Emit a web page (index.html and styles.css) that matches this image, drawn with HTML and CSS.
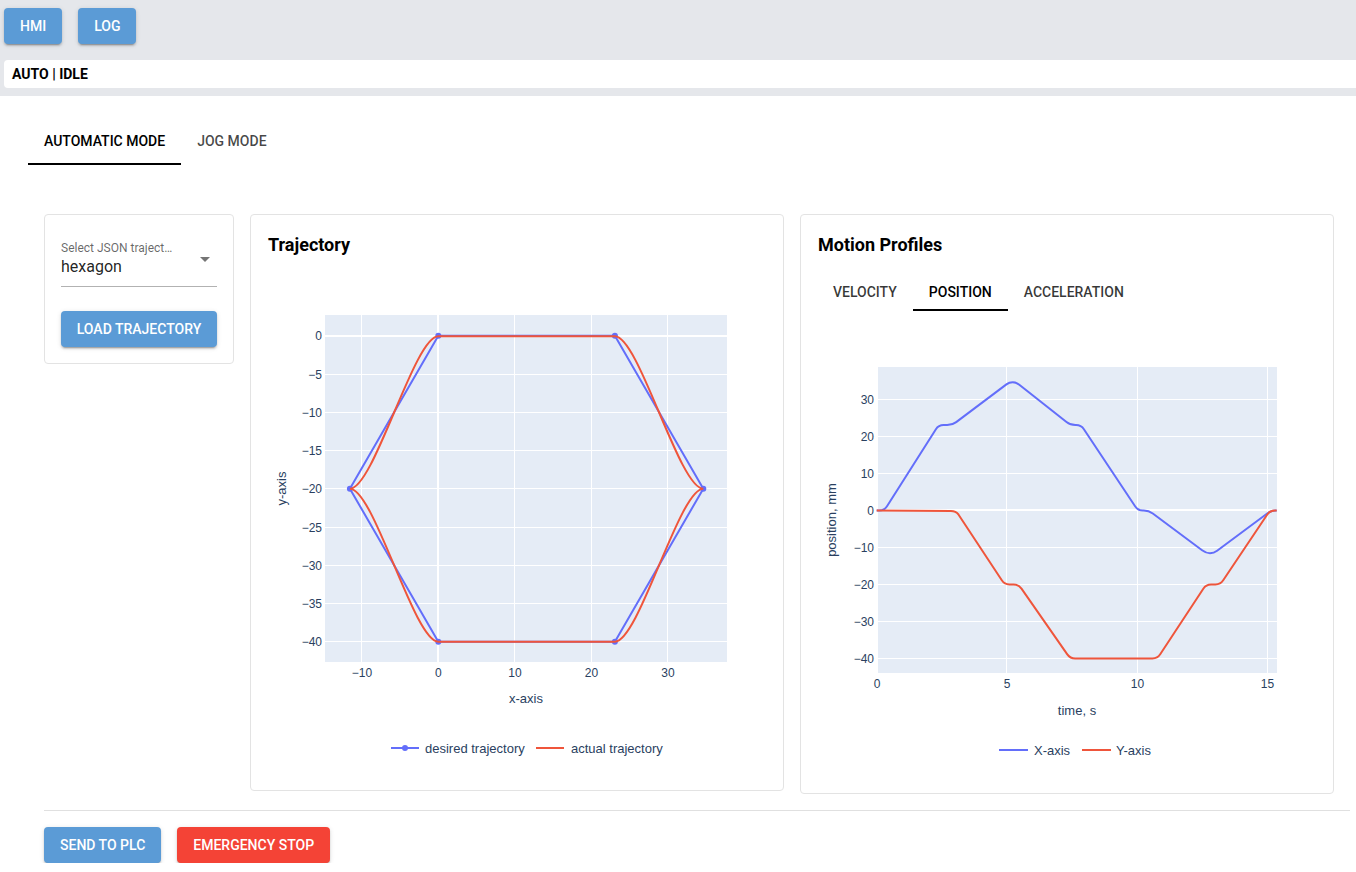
FILE: index.html
```html
<!DOCTYPE html>
<html lang="en">
<head>
<meta charset="utf-8">
<title>HMI</title>
<link rel="stylesheet" href="styles.css">
</head>
<body>
<header class="topbar">
  <div class="nav">
    <button class="btn btn-blue">HMI</button>
    <button class="btn btn-blue">LOG</button>
  </div>
  <div class="status">AUTO&nbsp;|&nbsp;IDLE</div>
</header>

<main class="main">
  <nav class="tabs">
    <div class="tab active">Automatic Mode</div>
    <div class="tab">Jog Mode</div>
  </nav>

  <section class="panel">
    <div class="cards">
      <div class="card control-card">
        <div class="select">
          <div class="select-label">Select JSON traject…</div>
          <div class="select-input">
            <span class="select-value">hexagon</span>
            <svg class="select-arrow" width="10" height="5" viewBox="0 0 10 5"><path d="M0 0h10L5 5z" fill="rgba(0,0,0,0.54)"/></svg>
          </div>
        </div>
        <button class="btn btn-blue btn-full">Load Trajectory</button>
      </div>

      <div class="card chart-card">
        <h2 class="card-title">Trajectory</h2>
        <svg class="chart" width="532" height="533" viewBox="251 257 532 533">
          <rect x="325" y="315" width="402" height="347" fill="#E5ECF6"/>
          <g stroke="#fff" stroke-width="1" shape-rendering="crispEdges">
            <line x1="361.5" y1="315" x2="361.5" y2="662"/>
            <line x1="514.5" y1="315" x2="514.5" y2="662"/>
            <line x1="591.5" y1="315" x2="591.5" y2="662"/>
            <line x1="667.5" y1="315" x2="667.5" y2="662"/>
            <line x1="325" y1="374.5" x2="727" y2="374.5"/>
            <line x1="325" y1="412.5" x2="727" y2="412.5"/>
            <line x1="325" y1="450.5" x2="727" y2="450.5"/>
            <line x1="325" y1="488.5" x2="727" y2="488.5"/>
            <line x1="325" y1="527.5" x2="727" y2="527.5"/>
            <line x1="325" y1="565.5" x2="727" y2="565.5"/>
            <line x1="325" y1="603.5" x2="727" y2="603.5"/>
            <line x1="325" y1="641.5" x2="727" y2="641.5"/>
          </g>
          <g stroke="#fff" stroke-width="2" shape-rendering="crispEdges">
            <line x1="438" y1="315" x2="438" y2="662"/>
            <line x1="325" y1="336" x2="727" y2="336"/>
          </g>
          <path d="M438.3 335.7 L614.9 335.7 L703.3 488.7 L614.9 641.7 L438.3 641.7 L349.9 488.7 Z" fill="none" stroke="#636efa" stroke-width="2" stroke-linejoin="round"/>
          <g fill="#636efa">
            <circle cx="438.3" cy="335.7" r="3"/>
            <circle cx="614.9" cy="335.7" r="3"/>
            <circle cx="703.3" cy="488.7" r="3"/>
            <circle cx="614.9" cy="641.7" r="3"/>
            <circle cx="438.3" cy="641.7" r="3"/>
            <circle cx="349.9" cy="488.7" r="3"/>
          </g>
          <path d="M438.3 336.3 L614.9 336.3 C638.9 336.3 679.3 488.7 703.3 488.7 C679.3 488.7 638.9 641.7 614.9 641.7 L438.3 641.7 C414.3 641.7 373.9 488.7 349.9 488.7 C373.9 488.7 414.3 336.3 438.3 336.3" fill="none" stroke="#EF553B" stroke-width="2"/>
          <g class="tick" text-anchor="end">
            <text x="322" y="340.3">0</text>
            <text x="322" y="378.6">−5</text>
            <text x="322" y="416.8">−10</text>
            <text x="322" y="455">−15</text>
            <text x="322" y="493.2">−20</text>
            <text x="322" y="531.5">−25</text>
            <text x="322" y="569.7">−30</text>
            <text x="322" y="608">−35</text>
            <text x="322" y="646.2">−40</text>
          </g>
          <g class="tick" text-anchor="middle">
            <text x="362" y="677">−10</text>
            <text x="438.3" y="677">0</text>
            <text x="515" y="677">10</text>
            <text x="591.5" y="677">20</text>
            <text x="668" y="677">30</text>
          </g>
          <text class="axis-title" x="526" y="702.5" text-anchor="middle">x-axis</text>
          <text class="axis-title" x="285.5" y="488.5" text-anchor="middle" transform="rotate(-90 285.5 488.5)">y-axis</text>
          <line x1="391" y1="748" x2="419" y2="748" stroke="#636efa" stroke-width="2"/>
          <circle cx="405" cy="748" r="3" fill="#636efa"/>
          <text class="legend" x="425" y="752.5">desired trajectory</text>
          <line x1="536" y1="748" x2="564" y2="748" stroke="#EF553B" stroke-width="2"/>
          <text class="legend" x="571" y="752.5">actual trajectory</text>
        </svg>
      </div>

      <div class="card chart-card">
        <h2 class="card-title">Motion Profiles</h2>
        <nav class="subtabs">
          <div class="subtab">Velocity</div>
          <div class="subtab active">Position</div>
          <div class="subtab">Acceleration</div>
        </nav>
        <svg class="chart" width="532" height="482" viewBox="801 311 532 482">
          <rect x="877" y="367" width="400" height="306" fill="#E5ECF6"/>
          <g stroke="#fff" stroke-width="1" shape-rendering="crispEdges">
            <line x1="877" y1="399.5" x2="1277" y2="399.5"/>
            <line x1="877" y1="436.5" x2="1277" y2="436.5"/>
            <line x1="877" y1="473.5" x2="1277" y2="473.5"/>
            <line x1="877" y1="547.5" x2="1277" y2="547.5"/>
            <line x1="877" y1="584.5" x2="1277" y2="584.5"/>
            <line x1="877" y1="621.5" x2="1277" y2="621.5"/>
            <line x1="877" y1="658.5" x2="1277" y2="658.5"/>
            <line x1="1006.5" y1="367" x2="1006.5" y2="673"/>
            <line x1="1137.5" y1="367" x2="1137.5" y2="673"/>
            <line x1="1267.5" y1="367" x2="1267.5" y2="673"/>
          </g>
          <g stroke="#fff" stroke-width="2" shape-rendering="crispEdges">
            <line x1="877" y1="510" x2="1277" y2="510"/>
            <line x1="877" y1="367" x2="877" y2="673"/>
          </g>
          <path d="M876.7 510.5 L879.3 510.5 Q884.3 510.5 887 506.3 L935.9 429.3 Q938.6 425.1 943.6 425.1 L947.2 425.1 Q952.2 425.1 956.2 422.1 L1006.4 384.4 Q1009.2 382.3 1012.7 382.3 Q1016.2 382.3 1019.3 384.8 L1066.5 422 Q1070.4 425.1 1075.4 425.1 L1076.1 425.1 Q1081.1 425.1 1083.9 429.3 L1135.1 506.3 Q1137.9 510.5 1142.9 510.5 L1143.8 510.5 Q1148.8 510.5 1152.8 513.5 L1202.1 550.2 Q1206.1 553.2 1210 553.2 Q1213.9 553.2 1217.1 550.8 L1267.2 513.5 Q1271.2 510.5 1276.2 510.5 L1276.7 510.5" fill="none" stroke="#636efa" stroke-width="2"/>
          <path d="M876.7 510.5 L950.9 511 Q955.9 511 958.6 514.7 L1001.8 580.3 Q1004.5 584.5 1009.5 584.5 L1013.6 584.5 Q1018.6 584.5 1021.5 588.6 L1067.3 654.4 Q1070.2 658.5 1075.2 658.5 L1152.4 658.5 Q1157.4 658.5 1160.2 654.3 L1203.3 588.7 Q1206.1 584.5 1211.1 584.5 L1215.4 584.5 Q1220.4 584.5 1223.2 580.3 L1267.1 514.7 Q1269.9 510.5 1274.9 510.5 L1276.7 510.5" fill="none" stroke="#EF553B" stroke-width="2"/>
          <g class="tick" text-anchor="end">
            <text x="874" y="403.8">30</text>
            <text x="874" y="440.8">20</text>
            <text x="874" y="477.8">10</text>
            <text x="874" y="514.8">0</text>
            <text x="874" y="551.8">−10</text>
            <text x="874" y="588.8">−20</text>
            <text x="874" y="625.8">−30</text>
            <text x="874" y="662.8">−40</text>
          </g>
          <g class="tick" text-anchor="middle">
            <text x="877" y="687.5">0</text>
            <text x="1007" y="687.5">5</text>
            <text x="1137.5" y="687.5">10</text>
            <text x="1267.5" y="687.5">15</text>
          </g>
          <text class="axis-title" x="1077" y="714.5" text-anchor="middle">time, s</text>
          <text class="axis-title" x="836" y="520" text-anchor="middle" transform="rotate(-90 836 520)">position, mm</text>
          <line x1="999" y1="750" x2="1028" y2="750" stroke="#636efa" stroke-width="2"/>
          <text class="legend" x="1034" y="754.8">X-axis</text>
          <line x1="1082" y1="750" x2="1111" y2="750" stroke="#EF553B" stroke-width="2"/>
          <text class="legend" x="1116" y="754.8">Y-axis</text>
        </svg>
      </div>
    </div>

    <hr class="divider">

    <div class="actions">
      <button class="btn btn-blue">Send to PLC</button>
      <button class="btn btn-red">Emergency Stop</button>
    </div>
  </section>
</main>
</body>
</html>
```

FILE: styles.css
```css
* {
  box-sizing: border-box;
}

body {
  margin: 0;
  font-family: Roboto, "Liberation Sans", Arial, sans-serif;
  color: rgba(0, 0, 0, 0.87);
  background: #fff;
}

/* ---------- top bar ---------- */
.topbar {
  background: #e5e7eb;
  padding: 8px 0 8px 4px;
}

.nav {
  display: flex;
  gap: 16px;
}

.btn {
  font-family: Roboto, "Liberation Sans", Arial, sans-serif;
  font-weight: 500;
  font-size: 14px;
  text-transform: uppercase;
  white-space: nowrap;
  color: #fff;
  border: 0;
  border-radius: 4px;
  height: 36px;
  padding: 0 16px;
  box-shadow: 0 3px 1px -2px rgba(0, 0, 0, 0.2), 0 2px 2px 0 rgba(0, 0, 0, 0.14), 0 1px 5px 0 rgba(0, 0, 0, 0.12);
  cursor: pointer;
}

.btn-blue {
  background: #5b9bd6;
}

.btn-red {
  background: #f44336;
}

.btn-full {
  width: 100%;
  display: block;
  padding: 0 4px;
}

.status {
  margin-top: 16px;
  height: 28px;
  background: #fff;
  border-radius: 4px 0 0 4px;
  padding-left: 8px;
  display: flex;
  align-items: center;
  font-size: 14px;
  font-weight: 700;
  color: #000;
}

/* ---------- tabs ---------- */
.tabs {
  display: flex;
  margin: 21px 0 0 28px;
}

.tab {
  height: 48px;
  padding: 2px 16px 0;
  border-bottom: 2px solid transparent;
  display: flex;
  align-items: center;
  font-size: 14px;
  font-weight: 500;
  text-transform: uppercase;
  color: rgba(0, 0, 0, 0.72);
}

.tab.active {
  color: #000;
  border-bottom-color: #000;
}

/* ---------- panel ---------- */
.panel {
  padding: 49px 0 0 44px;
}

.cards {
  display: flex;
  gap: 16px;
  align-items: flex-start;
}

.card {
  border: 1px solid #e3e3e3;
  border-radius: 4px;
  background: #fff;
}

.control-card {
  width: 190px;
  padding: 16px;
}

.select-label {
  margin-top: 9px;
  height: 16px;
  line-height: 16px;
  font-size: 12px;
  color: rgba(0, 0, 0, 0.6);
  white-space: nowrap;
}

.select-input {
  display: flex;
  justify-content: space-between;
  padding: 1px 7px 10px 0;
  border-bottom: 1px solid rgba(0, 0, 0, 0.3);
}

.select-value {
  font-size: 16px;
  line-height: 19px;
  color: rgba(0, 0, 0, 0.87);
}

.select-arrow {
  margin-top: 0;
}

.control-card .btn-full {
  margin-top: 24px;
}

.chart-card {
  width: 534px;
}

.card-title {
  margin: 0;
  padding: 18px 17px 0;
  font-size: 18px;
  line-height: 24px;
  font-weight: 700;
  color: #000;
}

.chart {
  display: block;
}

.chart text {
  font-family: "Liberation Sans", Arial, sans-serif;
  fill: #2a3f5f;
}

.chart .tick {
  font-size: 12px;
}

.chart .axis-title,
.chart .legend {
  font-size: 13px;
}

.subtabs {
  display: flex;
  margin-left: 16px;
}

.subtab {
  height: 54px;
  padding: 18px 16px 0;
  border-bottom: 2px solid transparent;
  display: flex;
  align-items: center;
  font-size: 14px;
  font-weight: 500;
  text-transform: uppercase;
  color: rgba(0, 0, 0, 0.78);
}

.subtab.active {
  color: #000;
  border-bottom-color: #000;
}

/* ---------- bottom ---------- */
.divider {
  margin: 16px 0 0;
  width: 1306px;
  height: 0;
  border: 0;
  border-top: 1px solid #e0e0e0;
}

.actions {
  display: flex;
  gap: 16px;
  margin-top: 16px;
}
```
